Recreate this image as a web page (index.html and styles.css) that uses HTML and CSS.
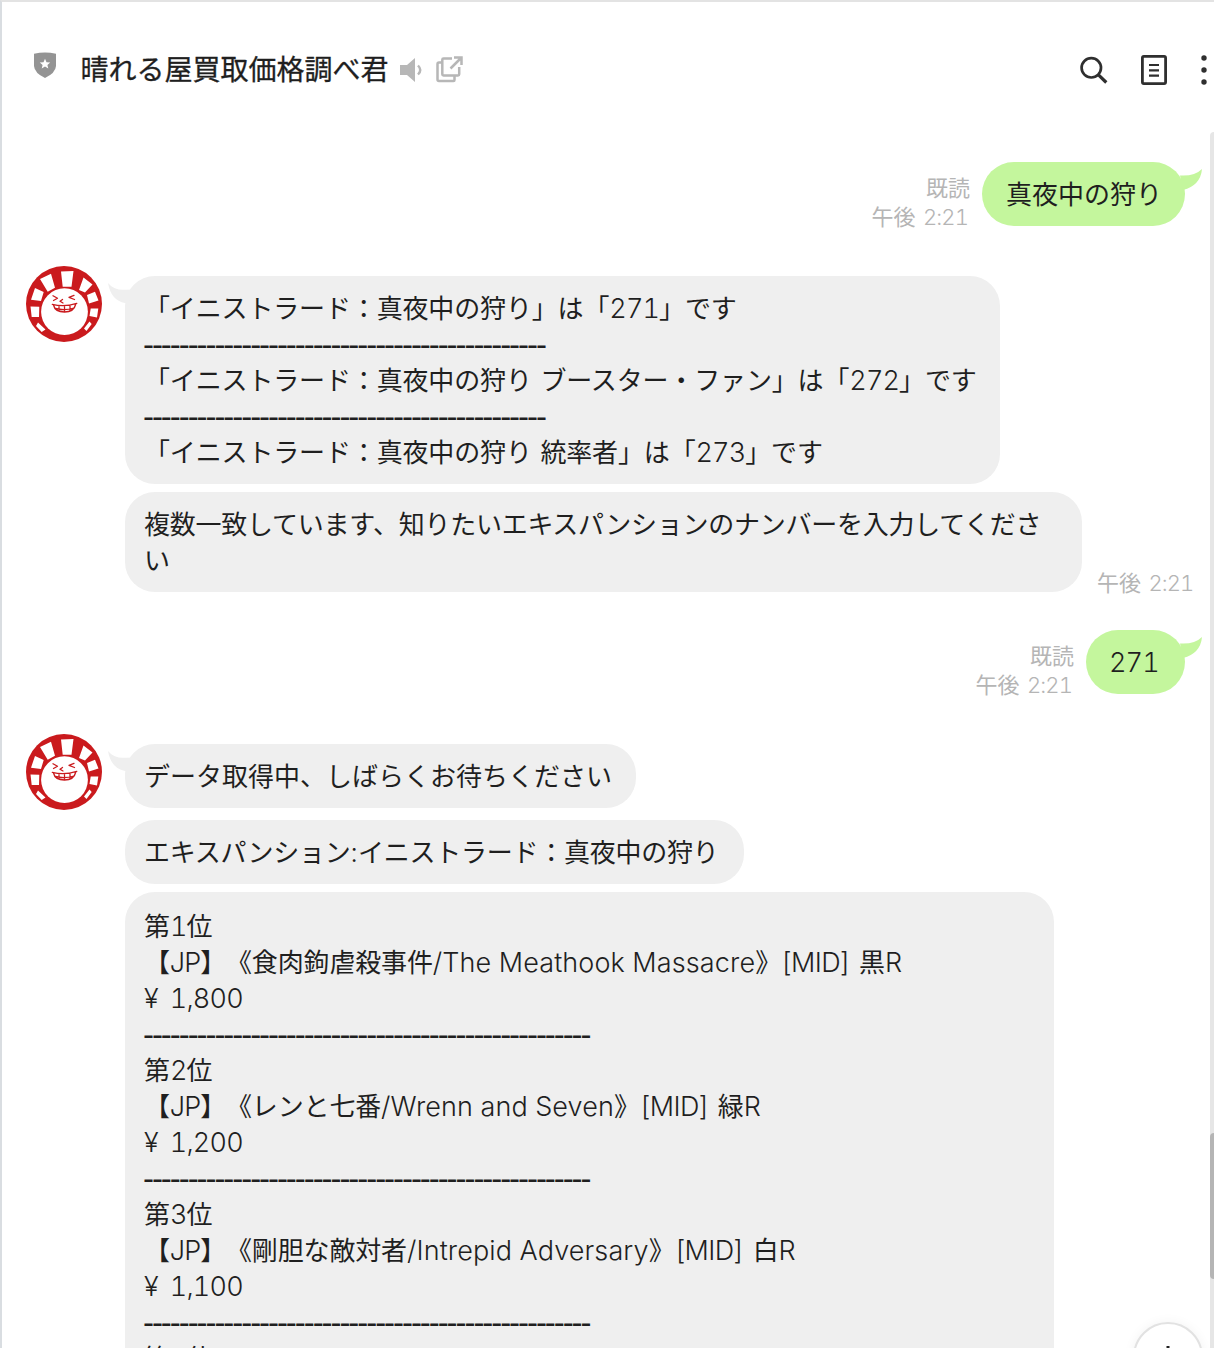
FILE: index.html
```html
<!DOCTYPE html>
<html lang="ja">
<head>
<meta charset="utf-8">
<title>晴れる屋買取価格調べ君</title>
<link rel="stylesheet" href="styles.css">
</head>
<body>
<svg class="defs" width="0" height="0" aria-hidden="true">
  <symbol id="avatar" viewBox="0 0 76 76">
    <circle cx="38" cy="38" r="38" fill="#ca1a1d"/>
    <g fill="#fff">
      <circle cx="38.5" cy="45.7" r="23.4"/>
      <path d="M35 5.5 47.5 5 45.5 20.8H36.700zM14 13 25 7.700 29 21.700 21.700 25.700zM9 22 17.700 26 15 35 5 33.700zM4.500 40.500 13.300 40.700 13 51 5.700 51zM12 56.500 19.500 63.500 15.700 66 10 60zM57.500 11.500 66.500 18.500 59 26.500 53 24zM61 29 69 25.700 72.500 34.500 63 37.500zM64.700 42.500H72.300L71 51.500 63.500 50zM63.500 55.500 65.700 58 60.500 65 58 62.500z"/>
    </g>
    <g fill="none" stroke="#ca1a1d" stroke-width="1.300" stroke-linecap="round" stroke-linejoin="round">
      <path d="M27 29.800 31.500 32.300 27.500 34.500M36.500 33.500 34 35.300 37 37M48 29.300 43 31.300 48.500 33.500"/>
      <path d="M26.300 38.300Q38 41.500 50.800 37.300M27.500 39Q29 46 38.500 46T49.800 38M29.500 42.500Q38.500 45 48 42M33 40V44.500M38.500 40.300V45.500M44 39.700V44.500"/>
    </g>
  </symbol>
  <symbol id="tail-left" viewBox="0 0 27 22">
    <path d="M0 0Q6 7.500 17 6.800L27 6.500 20 20H17Q3 17.500 0 0z"/>
  </symbol>
  <symbol id="tail-right" viewBox="0 0 27 22">
    <path d="M27 0Q19.500 7.500 5 6.500L8 21Q25.500 16.500 27 0z"/>
  </symbol>
</svg>
<div class="app">
  <header class="header">
    <svg class="shield" width="24" height="27" viewBox="0 0 24 27"><path d="M1 1.800Q12 -.8 23 1.800V14Q22.500 21 12 26 1.500 21 1 14z" fill="#949494"/><path d="M12 6.800 13.500 10.200 17.200 10.500 14.400 12.900 15.300 16.600 12 14.600 8.700 16.600 9.600 12.900 6.800 10.500 10.500 10.200z" fill="#fff"/></svg>
    <h1 class="title">晴れる屋買取価格調べ君</h1>
    <svg class="speaker" width="24" height="26" viewBox="0 0 24 26"><path d="M0 8H7L15 1V25L7 18H0z" fill="#b7b7b7"/><path d="M18 8.500Q22.500 13 18 17.500" fill="none" stroke="#b7b7b7" stroke-width="2.400"/></svg>
    <svg class="popout" width="27" height="27" viewBox="0 0 27 27" fill="none" stroke="#b7b7b7" stroke-width="2.500" stroke-linejoin="round"><path d="M16 2.500H7.500Q6.300 2.500 6.300 3.700V18.300Q6.300 19.500 7.500 19.500H22Q23.200 19.500 23.200 18.300V11"/><path d="M6 6.500H3Q1.500 6.500 1.500 8V23.500Q1.500 25 3 25H17.500Q18.500 25 18.500 24V20"/><path d="M18 1.500H25.500V9M25 2 14.500 12.500" stroke-linejoin="miter"/></svg>
    <div class="actions">
      <svg width="28" height="28" viewBox="0 0 28 28" fill="none" stroke="#2f2f2f" stroke-width="2.700"><circle cx="11.300" cy="11.800" r="9.700"/><path d="M18.200 18.600 26.300 26.500" stroke-width="3.200"/></svg>
      <svg width="26" height="30" viewBox="0 0 26 30" fill="none" stroke="#2f2f2f" stroke-width="2.800"><rect x="1.400" y="1.400" width="23.200" height="27.200" rx="1.500"/><path d="M8 10H18M8 15.300H18M8 20.700H18" stroke-width="2.200"/></svg>
      <svg width="6" height="30" viewBox="0 0 6 30" fill="#2f2f2f"><circle cx="3" cy="3" r="2.700"/><circle cx="3" cy="15" r="2.700"/><circle cx="3" cy="27" r="2.700"/></svg>
    </div>
  </header>
  <main class="body">
    <div class="chat">
      <section class="sent">
        <div class="meta"><span>既読</span><time>午後 <i class="num">2:21</i></time></div>
        <div class="bubble mine"><p>真夜中の狩り</p><svg class="tail-r" width="27" height="22"><use href="#tail-right"/></svg></div>
      </section>
      <section class="received">
        <svg class="avatar" width="76" height="76"><use href="#avatar"/></svg>
        <div class="stack">
          <div class="bubble b1"><svg class="tail-l" width="27" height="22"><use href="#tail-left"/></svg>
            <p class="tight">「イニストラード：真夜中の狩り」は「<i class="num">271</i>」です</p>
            <p class="dash">---------------------------------------------</p>
            <p class="tight">「イニストラード：真夜中の狩り ブースター・ファン」は「<i class="num">272</i>」です</p>
            <p class="dash">---------------------------------------------</p>
            <p class="tight">「イニストラード：真夜中の狩り 統率者」は「<i class="num">273</i>」です</p>
          </div>
          <div class="with-time">
            <div class="bubble b2">
              <p class="tighter">複数一致しています、知りたいエキスパンションのナンバーを入力してくださ<br>い</p>
            </div>
            <div class="meta"><time>午後 <i class="num">2:21</i></time></div>
          </div>
        </div>
      </section>
      <section class="sent second">
        <div class="meta"><span>既読</span><time>午後 <i class="num">2:21</i></time></div>
        <div class="bubble mine number"><p><i class="num">271</i></p><svg class="tail-r" width="27" height="22"><use href="#tail-right"/></svg></div>
      </section>
      <section class="received">
        <svg class="avatar" width="76" height="76"><use href="#avatar"/></svg>
        <div class="stack">
          <div class="bubble b3"><svg class="tail-l" width="27" height="22"><use href="#tail-left"/></svg><p>データ取得中、しばらくお待ちください</p></div>
          <div class="bubble b4"><p class="tighter">エキスパンション<i>:</i>イニストラード：真夜中の狩り</p></div>
          <div class="bubble b5">
            <p>第<i class="num">1</i>位</p>
            <p class="tight">【<i class="lang">JP</i>】《食肉鉤虐殺事件<i>/The Meathook Massacre</i>》<i class="set">[MID] </i>黒<i>R</i></p>
            <p><i class="yen">¥ 1,800</i></p>
            <p class="dash">--------------------------------------------------</p>
            <p>第<i class="num">2</i>位</p>
            <p class="tight">【<i class="lang">JP</i>】《レンと七番<i>/Wrenn and Seven</i>》<i class="set">[MID] </i>緑<i>R</i></p>
            <p><i class="yen">¥ 1,200</i></p>
            <p class="dash">--------------------------------------------------</p>
            <p>第<i class="num">3</i>位</p>
            <p class="tight">【<i class="lang">JP</i>】《剛胆な敵対者<i>/Intrepid Adversary</i>》<i class="set">[MID] </i>白<i>R</i></p>
            <p><i class="yen">¥ 1,100</i></p>
            <p class="dash">--------------------------------------------------</p>
            <p>第<i class="num">4</i>位</p>
          </div>
        </div>
      </section>
    </div>
    <div class="track"><div class="thumb"></div></div>
  </main>
  <button class="to-bottom" aria-label="最新へ"><svg width="24" height="26" viewBox="0 0 24 26" fill="none" stroke="#222" stroke-width="3"><path d="M12 0V24M3 15 12 24 21 15"/></svg></button>
</div>
</body>
</html>
```
FILE: styles.css
```css
* { box-sizing: border-box; }
body {
  margin: 0;
  background: #fff;
  color: #1f1f1f;
  font-family: "Noto Sans CJK JP", sans-serif;
  text-spacing-trim: space-all;
}
.defs { display: block; width: 0; height: 0; }
.app {
  position: relative;
  display: flex;
  flex-direction: column;
  height: 1348px;
  overflow: hidden;
  border-top: 2px solid #e3e3e3;
  border-left: 2px solid #d9dde1;
}
.header {
  display: flex;
  align-items: center;
  height: 130px;
  flex: none;
  padding: 12px 7px 0 31px;
}
.header svg { display: block; }
.shield { margin-top: -16px; }
.title {
  margin: -10px 11px 0 23.5px;
  font-size: 28px;
  font-weight: 400;
  line-height: 40px;
  -webkit-text-stroke: 0.3px #1f1f1f;
}
.speaker { margin-top: -7px; }
.popout { margin: -7px 0 0 12px; }
.actions { display: flex; align-items: center; gap: 34px; margin: -7px 0 0 auto; }
.actions svg:first-child { margin-right: -1px; }
.body { display: flex; flex: 1; min-height: 0; }
.chat { flex: 1; min-width: 0; padding-top: 30px; overflow: hidden; }
.track { width: 4px; background: #e6e6e6; border-top-left-radius: 4px; }
.thumb { height: 146px; margin-top: 1001px; background: #b5b5b5; border-radius: 4px 0 0 4px; }

i {
  font-family: Inter, "Liberation Sans", sans-serif;
  font-size: 27px;
  font-weight: 350;
  font-style: normal;
  font-variant-numeric: tabular-nums;
  letter-spacing: 0.12px;
  word-spacing: 0;
  line-height: 1;
}
p { margin: 0; height: 36px; line-height: 36px; white-space: nowrap; }
.bubble {
  position: relative;
  width: fit-content;
  padding: 13px 20px 15px 19px;
  border-radius: 30px;
  background: #efefef;
  font-size: 26px;
}
.sent { display: flex; justify-content: flex-end; align-items: flex-end; gap: 12px; padding-right: 25px; }
.mine { width: 203px; padding: 13px 0 15px 24px; border-radius: 32px; background: #c4f69d; }
.number { width: 99px; padding-left: 23px; }
.meta {
  display: flex;
  flex-direction: column;
  align-items: flex-end;
  color: #b5b5b5;
  font-size: 22px;
  line-height: 29px;
  word-spacing: 2.5px;
  white-space: nowrap;
}
.meta .num { font-size: 22px; }
.sent .meta { margin-bottom: -4px; }
.sent time { margin-right: 2px; }
.tail-l, .tail-r { position: absolute; top: 7px; }
.tail-l { left: -17px; fill: #efefef; }
.tail-r { right: -17px; fill: #c4f69d; }
.received { display: flex; align-items: flex-start; gap: 23px; padding-left: 24px; margin-top: 50px; }
.avatar { display: block; flex: none; margin-top: -10px; }
.stack { display: flex; flex-direction: column; gap: 8px; }
.with-time { display: flex; align-items: flex-end; gap: 15px; }
.with-time .meta { margin-bottom: -4px; }
.second { margin-top: 38px; }
.b1 { width: 875px; }
.b2 { width: 957px; height: 100px; }
.b3 { width: 511px; margin-bottom: 4px; }
.b4 { width: 619px; }
.b5 { width: 929px; height: 500px; padding-top: 15px; }
.tight { letter-spacing: -0.15px; word-spacing: 3px; }
.tighter { letter-spacing: -0.25px; }
.num { letter-spacing: -0.9px; }
.lang { letter-spacing: -1px; }
.set { letter-spacing: -0.6px; word-spacing: 2.5px; }
.yen { letter-spacing: -0.8px; word-spacing: 5.5px; }
.dash {
  margin-left: -1px;
  padding-top: 2px;
  font-family: "Liberation Sans", sans-serif;
  font-size: 33px;
  letter-spacing: -2.06px;
}
.to-bottom {
  position: absolute;
  top: 1320px;
  left: 1131px;
  display: flex;
  justify-content: center;
  width: 70px;
  height: 70px;
  padding: 22px 0 0;
  border: 2px solid #e2e2e2;
  border-radius: 50%;
  background: #fff;
  box-shadow: 0 0 12px rgba(0, 0, 0, 0.05);
}
```
